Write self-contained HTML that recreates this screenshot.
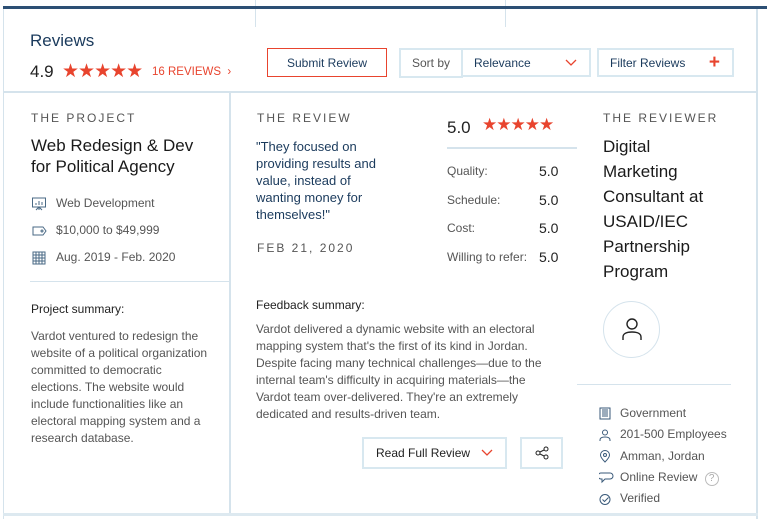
<!DOCTYPE html>
<html><head><meta charset="utf-8"><style>
*{margin:0;padding:0;box-sizing:border-box}
body{width:767px;height:523px;background:#fff;font-family:"Liberation Sans",sans-serif;position:relative;overflow:hidden;color:#1a1a1a}
.a{position:absolute}
.lab{font-size:12px;letter-spacing:2px;color:#555;}
.st{color:#e8442e;letter-spacing:-1px}
.btn{position:absolute;border:2px solid #d8e8f0;font-size:12px;color:#1a3a5c;display:flex;align-items:center}
.sm{font-size:12px;color:#555}
.ic{display:inline-block;width:24px;vertical-align:middle}
.chev{position:absolute;right:12px;top:10px}
</style></head><body>
<div class="a" style="left:255px;top:0;width:1px;height:27px;background:#d5e3ec"></div>
<div class="a" style="left:505px;top:0;width:1px;height:27px;background:#d5e3ec"></div>
<div class="a" style="left:3px;top:6px;width:764px;height:3px;background:#2c4f74"></div>
<div class="a" style="left:3px;top:9px;width:1px;height:510px;background:#d5e3ec"></div>
<div class="a" style="left:756px;top:9px;width:2px;height:510px;background:#d5e3ec"></div>
<div class="a" style="left:3px;top:91px;width:755px;height:2px;background:#d5e3ec"></div>
<div class="a" style="left:3px;top:513px;width:755px;height:3px;background:#dde9f0"></div>
<div class="a" style="left:229px;top:93px;width:2px;height:420px;background:#d5e3ec"></div>

<div class="a" style="left:30px;top:31px;font-size:17px;color:#1a3a5c">Reviews</div>
<div class="a" style="left:30px;top:62px;font-size:17px;color:#222">4.9</div>
<div class="a st" style="left:62px;top:60px;font-size:19px">★★★★★</div>
<div class="a" style="left:152px;top:66px;font-size:11.5px;color:#e8442e">16 REVIEWS &nbsp;›</div>

<div class="btn" style="left:267px;top:48px;width:120px;height:29px;border:1.5px solid #e8442e;justify-content:center">Submit Review</div>
<div class="btn" style="left:399px;top:48px;width:64px;height:30px;justify-content:center;color:#555">Sort by</div>
<div class="btn" style="left:461px;top:48px;width:130px;height:29px;padding-left:11px;">Relevance<svg class="chev" style="top:9px" width="12" height="8" viewBox="0 0 12 8" fill="none" stroke="#e8442e" stroke-width="1.3"><path d="M1 1l5 5 5-5"/></svg></div>
<div class="btn" style="left:597px;top:48px;width:137px;height:29px;padding-left:11px">Filter Reviews<span style="position:absolute;right:12px;top:2px;color:#e8442e;font-size:19px;font-weight:bold">+</span></div>

<div class="a lab" style="left:31px;top:111px">THE PROJECT</div>
<div class="a" style="left:31px;top:135px;font-size:17px;line-height:21px;color:#1a1a1a">Web Redesign &amp; Dev<br>for Political Agency</div>
<div class="a sm" style="left:32px;top:190px;line-height:27px">
<div><svg class="ic" width="24" height="14" viewBox="0 0 24 14" fill="none" stroke="#4a6a85" stroke-width="1"><rect x="0.5" y="1" width="13" height="9"/><path d="M7 10v3M4 13l3-3 3 3M4 8V6M7 8V4M10 8V5"/></svg>Web Development</div>
<div><svg class="ic" width="24" height="14" viewBox="0 0 24 14" fill="none" stroke="#4a6a85" stroke-width="1"><path d="M1 3h10l3 4-3 4H1z"/><circle cx="10" cy="7" r="1"/></svg>$10,000 to $49,999</div>
<div><svg class="ic" width="24" height="14" viewBox="0 0 24 14" fill="none" stroke="#4a6a85" stroke-width="1"><rect x="1" y="1" width="12" height="12"/><path d="M1 4h12M1 7h12M1 10h12M4 1v12M7 1v12M10 1v12"/></svg>Aug. 2019 - Feb. 2020</div>
</div>
<div class="a" style="left:30px;top:281px;width:199px;height:1px;background:#d5e3ec"></div>
<div class="a" style="left:31px;top:302px;font-size:12px;color:#222">Project summary:</div>
<div class="a sm" style="left:31px;top:328px;width:182px;line-height:17px">Vardot ventured to redesign the website of a political organization committed to democratic elections. The website would include functionalities like an electoral mapping system and a research database.</div>

<div class="a lab" style="left:257px;top:111px">THE REVIEW</div>
<div class="a" style="left:256px;top:138px;width:135px;font-size:13px;line-height:17px;color:#1a3a5c">"They focused on providing results and value, instead of wanting money for themselves!"</div>
<div class="a lab" style="left:257px;top:241px">FEB 21, 2020</div>
<div class="a" style="left:447px;top:118px;font-size:17px;color:#222">5.0</div>
<div class="a st" style="left:482px;top:115px;font-size:17px">★★★★★</div>
<div class="a" style="left:447px;top:147px;width:130px;height:2px;background:#d5e3ec"></div>
<div class="a" style="left:447px;top:157px;line-height:28.5px;font-size:12px;color:#555">Quality:<br>Schedule:<br>Cost:<br>Willing to refer:</div>
<div class="a" style="left:539px;top:157px;line-height:28.5px;font-size:14px;color:#222">5.0<br>5.0<br>5.0<br>5.0</div>
<div class="a" style="left:256px;top:298px;font-size:12px;color:#222">Feedback summary:</div>
<div class="a sm" style="left:256px;top:321px;width:300px;line-height:17px">Vardot delivered a dynamic website with an electoral mapping system that's the first of its kind in Jordan. Despite facing many technical challenges—due to the internal team's difficulty in acquiring materials—the Vardot team over-delivered. They're an extremely dedicated and results-driven team.</div>
<div class="btn" style="left:362px;top:437px;width:145px;height:32px;padding-left:12px;color:#222">Read Full Review<svg class="chev" width="12" height="8" viewBox="0 0 12 8" fill="none" stroke="#e8442e" stroke-width="1.3"><path d="M1 1l5 5 5-5"/></svg></div>
<div class="btn" style="left:520px;top:437px;width:43px;height:32px;justify-content:center">
<svg width="14" height="14" viewBox="0 0 14 14" fill="none" stroke="#222" stroke-width="1"><circle cx="11" cy="3" r="2"/><circle cx="3" cy="7" r="2"/><circle cx="11" cy="11" r="2"/><path d="M5 6 9 4M5 8 9 10"/></svg></div>

<div class="a lab" style="left:603px;top:111px">THE REVIEWER</div>
<div class="a" style="left:603px;top:134px;font-size:17px;line-height:25px;color:#1a1a1a">Digital<br>Marketing<br>Consultant at<br>USAID/IEC<br>Partnership<br>Program</div>
<div class="a" style="left:603px;top:301px;width:57px;height:57px;border:1.5px solid #d5e3ec;border-radius:50%"></div>
<svg class="a" style="left:618px;top:316px" width="28" height="28" viewBox="0 0 28 28" fill="none" stroke="#222" stroke-width="1.4"><circle cx="14" cy="8" r="5"/><path d="M5 24v-3c0-3 3-5 9-5s9 2 9 5v3"/></svg>
<div class="a" style="left:577px;top:384px;width:154px;height:1px;background:#d5e3ec"></div>
<div class="a" style="left:599px;top:403px;line-height:21.3px;font-size:12px;color:#555">
<div><svg class="ic" style="width:21px" width="21" height="13" viewBox="0 0 21 13" fill="none" stroke="#3a5a7a" stroke-width="1"><rect x="1" y="1" width="10" height="11"/><path d="M3 3h6M3 5h6M3 7h6M3 9h6"/></svg>Government</div>
<div><svg class="ic" style="width:21px" width="21" height="13" viewBox="0 0 21 13" fill="none" stroke="#3a5a7a" stroke-width="1"><circle cx="6" cy="3.5" r="2.5"/><path d="M1 12v-1c0-2 2-3 5-3s5 1 5 3v1"/></svg>201-500 Employees</div>
<div><svg class="ic" style="width:21px" width="21" height="13" viewBox="0 0 21 13" fill="none" stroke="#3a5a7a" stroke-width="1"><path d="M6 12C3 9 1.5 7 1.5 5a4.5 4.5 0 019 0c0 2-1.5 4-4.5 7z"/><circle cx="6" cy="5" r="1.5"/></svg>Amman, Jordan</div>
<div><svg class="ic" style="width:21px" width="21" height="13" viewBox="0 0 21 13" fill="none" stroke="#3a5a7a" stroke-width="1"><path d="M2 2h9a1.5 1.5 0 010 6H6l-3 3V8h-1a1.5 1.5 0 010-6z"/></svg>Online Review <span style="display:inline-block;width:14px;height:14px;border:1px solid #bbb;border-radius:50%;font-size:10px;text-align:center;line-height:12px;color:#aaa;margin-left:4px">?</span></div>
<div><svg class="ic" style="width:21px" width="21" height="13" viewBox="0 0 21 13" fill="none" stroke="#3a5a7a" stroke-width="1"><circle cx="6" cy="6.5" r="5"/><path d="M3.5 6.5l2 2 4-4"/></svg>Verified</div>
</div>
</body></html>
